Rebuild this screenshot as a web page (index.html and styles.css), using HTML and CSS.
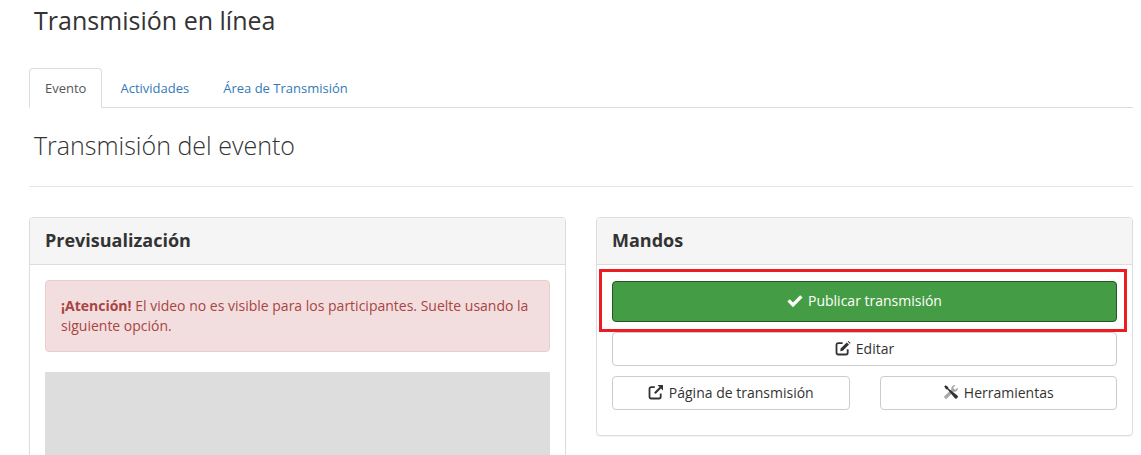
FILE: index.html
```html
<!DOCTYPE html>
<html lang="es">
<head>
    <meta charset="UTF-8">
    <title>Transmisión en línea</title>
    <link rel="stylesheet" href="styles.css">
</head>
<body>

<h1 class="page-title">Transmisión en línea</h1>

<ul class="tabs">
    <li class="tab active">Evento</li>
    <li class="tab">Actividades</li>
    <li class="tab">Área de Transmisión</li>
</ul>

<h2 class="section-title">Transmisión del evento</h2>
<hr class="divider">

<div class="panels">
    <section class="panel">
        <div class="panel-head">Previsualización</div>
        <div class="panel-body">
            <div class="alert"><strong>¡Atención!</strong> El video no es visible para los participantes. Suelte usando la siguiente opción.</div>
            <div class="preview"></div>
        </div>
    </section>

    <section class="panel controls">
        <div class="panel-head">Mandos</div>
        <div class="panel-body">
            <div class="highlight">
                <button class="btn btn-green">
                    <svg class="icon" viewBox="0 0 16 16"><path d="M.4 8.6 2.8 6.2 6 9.4 13.2 2.2 15.6 4.6 6 14.2Z" fill="currentColor"/></svg>
                    Publicar transmisión
                </button>
            </div>
            <button class="btn">
                <svg class="icon" viewBox="0 0 16 16"><path d="M7.6 3.2H3.2A1.7 1.7 0 0 0 1.5 4.9V12.8A1.7 1.7 0 0 0 3.2 14.5H11A1.7 1.7 0 0 0 12.7 12.8V9.2" fill="none" stroke="currentColor" stroke-width="1.8"/><path d="M5.6 8.6 11.8 2.4 14 4.6 7.8 10.8 5.3 11.2Z M12.6 1.6 13.4 .9 15.6 3.1 14.8 3.8Z" fill="currentColor"/></svg>
                Editar
            </button>
            <div class="btn-row">
                <button class="btn">
                    <svg class="icon" viewBox="0 0 16 16"><path d="M6.8 3.2H3.2A1.7 1.7 0 0 0 1.5 4.9V12.8A1.7 1.7 0 0 0 3.2 14.5H11A1.7 1.7 0 0 0 12.7 12.8V9.6" fill="none" stroke="currentColor" stroke-width="1.8"/><path d="M9.5 1H15V6.5L13 4.5 7.6 9.9 6.1 8.4 11.5 3Z" fill="currentColor"/></svg>
                    Página de transmisión
                </button>
                <button class="btn">
                    <svg class="icon" viewBox="0 0 16 16"><path d="M14.8 3.6 12.6 5.4 10.8 4.9 10.4 3.2 12.4 1.2A3.4 3.4 0 0 0 8.4 5.4L1.8 11.8A1.6 1.6 0 0 0 4.2 14.2L10.6 7.7A3.4 3.4 0 0 0 14.8 3.6Z" fill="#a9a9a9"/><path d="M2.6 1.2 1.2 2.6 3 5.2 4.6 5.4 11.6 14A1.6 1.6 0 0 0 14.4 11.4L5.4 4.6 5.2 3Z" fill="currentColor"/></svg>
                    Herramientas
                </button>
            </div>
        </div>
    </section>
</div>

</body>
</html>
```

FILE: styles.css
```css
* {
    box-sizing: border-box;
}

html {
    overflow: hidden;
}

body {
    margin: 0;
    height: 455px;
    overflow: hidden;
    padding: 0 8px 0 29px;
    font-family: "Open Sans", sans-serif;
    font-size: 14px;
    line-height: 20px;
    color: #333;
    background-color: white;
}

.page-title {
    margin: 3px 0 0 5px;
    font-size: 25px;
    line-height: 34px;
    font-weight: 400;
}

.tabs {
    display: flex;
    list-style: none;
    margin: 31px 0 0;
    padding: 0;
    border-bottom: 1px solid #ddd;
    font-size: 13px;
}

.tab {
    padding: 9px 15px 11px;
    height: 40px;
    margin-bottom: -1px;
    margin-right: 2px;
    color: #337ab7;
    border: 1px solid transparent;
    border-radius: 4px 4px 0 0;
}

.tab.active {
    color: #555;
    background-color: white;
    border-color: #ddd #ddd white;
}

.section-title {
    margin: 19px 0 0 5px;
    font-size: 25px;
    line-height: 36px;
    font-weight: 300;
}

.divider {
    margin: 23px 0 30px;
    border: none;
    border-top: 1px solid #e5e5e5;
}

.panels {
    display: grid;
    grid-template-columns: 537px 537px;
    gap: 30px;
    align-items: start;
}

.panel {
    border: 1px solid #ddd;
    border-radius: 4px;
    box-shadow: 0 1px 1px rgba(0,0,0,0.05);
}

.panel-head {
    height: 47px;
    padding: 0 15px;
    font-size: 18px;
    line-height: 44px;
    font-weight: 700;
    background-color: #f5f5f5;
    border-bottom: 1px solid #ddd;
    border-radius: 3px 3px 0 0;
}

.panel-body {
    padding: 15px;
}

.alert {
    padding: 15px;
    margin-bottom: 20px;
    color: #a94442;
    background-color: #f2dede;
    border: 1px solid #ebccd1;
    border-radius: 4px;
}

.preview {
    height: 100px;
    background-color: #ddd;
}

.controls .panel-body {
    padding-bottom: 25px;
}

.highlight {
    margin: -11px -10px 0 -13px;
    padding: 9px 7px 7px 10px;
    border: 3px solid #ed1c24;
}

.btn {
    display: flex;
    align-items: center;
    justify-content: center;
    gap: 5px;
    width: 100%;
    height: 34px;
    padding: 0 12px 2px;
    font-family: inherit;
    font-size: 14px;
    color: #333;
    background-color: white;
    border: 1px solid #ccc;
    border-radius: 4px;
}

.btn-green {
    height: 41px;
    color: white;
    background-color: #449d44;
    border-color: #255625;
}

.btn-row {
    display: grid;
    grid-template-columns: 1fr 1fr;
    gap: 30px;
    margin-top: 10px;
}

.icon {
    width: 16px;
    height: 16px;
    flex-shrink: 0;
}
```
